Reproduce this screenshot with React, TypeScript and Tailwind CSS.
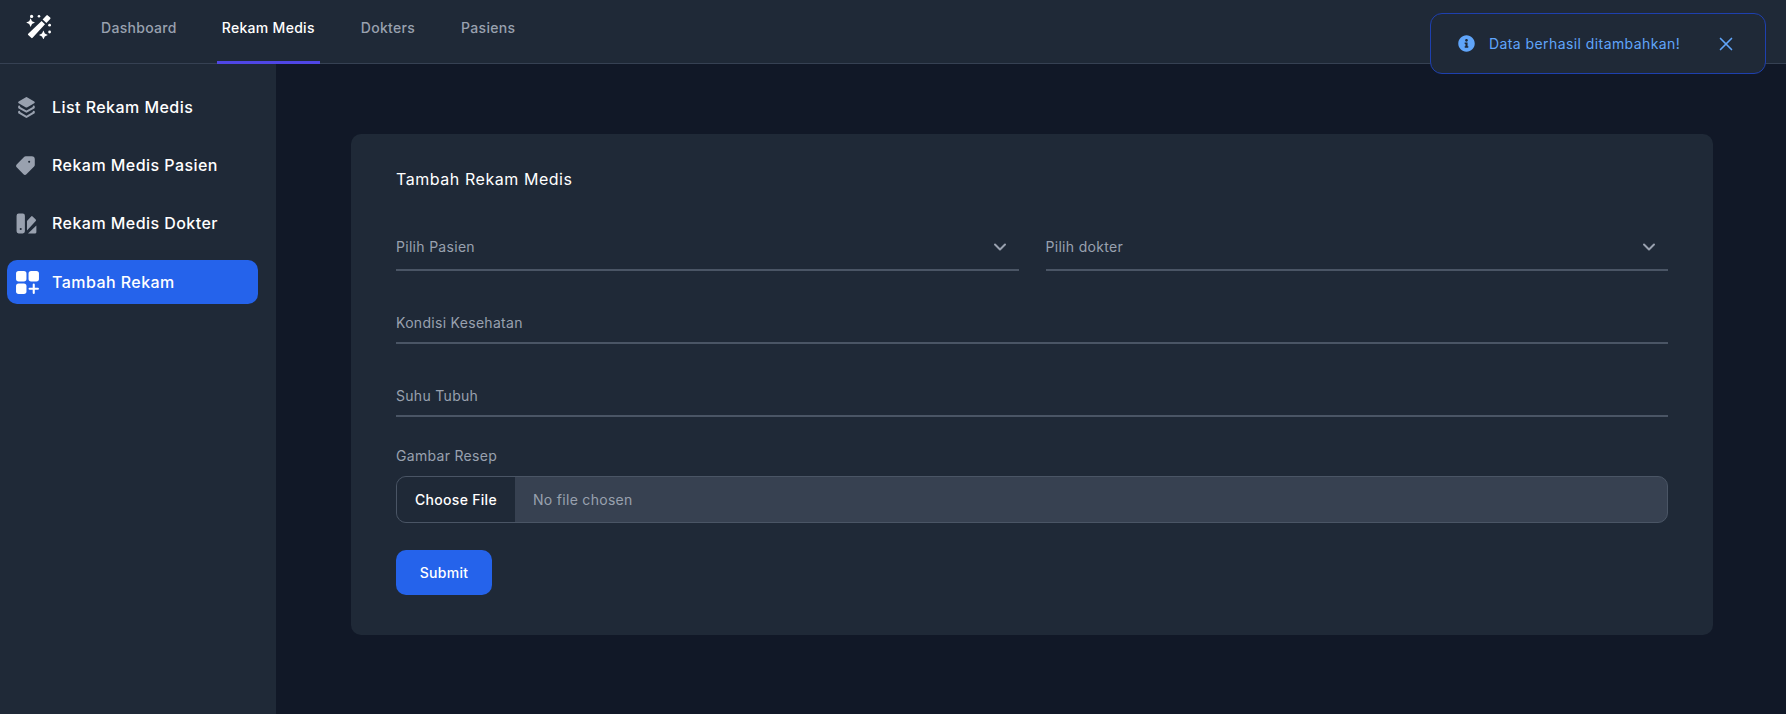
import { FaInfoCircle } from "react-icons/fa"
import { ChevronDown, X } from "lucide-react"

const font = "font-['Inter','Liberation_Sans',sans-serif]"

function Sparkle({ x, y, r }: { x: number; y: number; r: number }) {
  const k = r * 0.32
  return <path d={`M${x} ${y - r}L${x + k} ${y - k}L${x + r} ${y}L${x + k} ${y + k}L${x} ${y + r}L${x - k} ${y + k}L${x - r} ${y}L${x - k} ${y - k}Z`} />
}

function WandIcon() {
  return (
    <svg viewBox="0 0 26 26" fill="currentColor" className="w-[26px] h-[26px]">
      <path d="M15.6 8 19 11.2 6.6 24.8a1 1 0 0 1-1.4 0l-3-2.7a1 1 0 0 1 0-1.4L15.6 8Z" />
      <path d="M20.4 2.4a1 1 0 0 1 1.4 0l2.4 2.2a1 1 0 0 1 0 1.4l-3.8 4-3.8-3.6 3.8-4Z" />
      <Sparkle x={4.6} y={9.6} r={4.4} />
      <Sparkle x={17.4} y={22} r={4.4} />
      <circle cx="5.6" cy="3.4" r="1.6" />
      <circle cx="13" cy="3.2" r="1.3" />
      <circle cx="23.6" cy="12.2" r="1.4" />
      <circle cx="23.6" cy="19" r="1.4" />
    </svg>
  )
}

function LayersIcon() {
  return (
    <svg viewBox="1 0 24 24" fill="currentColor" className="w-[25px] h-[25px]">
      <path d="M5.005 10.19a1 1 0 0 1 1 1v.233l5.998 3.464L18 11.423v-.232a1 1 0 1 1 2 0V12a1 1 0 0 1-.5.866l-6.997 4.042a1 1 0 0 1-1 0l-6.998-4.042a1 1 0 0 1-.5-.866v-.81a1 1 0 0 1 1-1ZM5 15.15a1 1 0 0 1 1 1v.232l5.997 3.464 5.998-3.464v-.232a1 1 0 1 1 2 0v.81a1 1 0 0 1-.5.865l-6.998 4.042a1 1 0 0 1-1 0L4.5 17.824a1 1 0 0 1-.5-.866v-.81a1 1 0 0 1 1-1Z" />
      <path d="M12.503 2.134a1 1 0 0 0-1 0L4.501 6.17A1 1 0 0 0 4.5 7.902l7.002 4.047a1 1 0 0 0 1 0l6.998-4.04a1 1 0 0 0 0-1.732l-6.997-4.042Z" />
    </svg>
  )
}

function TagIcon() {
  return (
    <svg viewBox="2 0 24 24" fill="currentColor" className="w-[25px] h-[25px]">
      <path d="M18.045 3.007 12.31 3a1.965 1.965 0 0 0-1.4.585l-7.33 7.394a2 2 0 0 0 0 2.805l6.573 6.631a1.957 1.957 0 0 0 1.4.585 1.965 1.965 0 0 0 1.4-.585l7.409-7.477A2 2 0 0 0 21 11.479v-5.5a2.972 2.972 0 0 0-2.955-2.972Zm-2.452 6.438a1 1 0 1 1 0-2 1 1 0 0 1 0 2Z" />
    </svg>
  )
}

function SwatchIcon() {
  return (
    <svg viewBox="1 0 24 24" fill="currentColor" className="w-[25px] h-[25px]">
      <path fillRule="evenodd" d="M4.5 2.5h4a2 2 0 0 1 2 2v15a2 2 0 0 1-2 2h-4a2 2 0 0 1-2-2v-15a2 2 0 0 1 2-2Zm2 15.8a1 1 0 1 0 0-2 1 1 0 0 0 0 2Z" />
      <path d="M12.5 9.5 16.5 5.2a1 1 0 0 1 1.4 0l3 3a1 1 0 0 1 0 1.4l-8.4 9V9.5Z" />
      <path d="M21.5 14v6.5a1 1 0 0 1-1 1h-7l8-7.5Z" />
    </svg>
  )
}

function GridPlusIcon() {
  return (
    <svg viewBox="0 0 24 24" fill="currentColor" className="w-[25px] h-[25px]">
      <rect x="1" y="1" width="10" height="10" rx="2.5" />
      <rect x="13" y="1" width="10" height="10" rx="2.5" />
      <rect x="1" y="13" width="10" height="10" rx="2.5" />
      <path d="M18 13a1 1 0 0 1 1 1v3h3a1 1 0 1 1 0 2h-3v3a1 1 0 1 1-2 0v-3h-3a1 1 0 1 1 0-2h3v-3a1 1 0 0 1 1-1Z" />
    </svg>
  )
}

function SideItem({ icon, label, active }: { icon: React.ReactNode; label: string; active?: boolean }) {
  return (
    <div className={`flex items-center h-[44px] pl-[8px] rounded-[10px] text-[16px] font-medium tracking-[0.45px] text-white ${active ? "mt-[1px] bg-[#2563eb]" : ""}`}>
      <span className={active ? "text-white" : "text-gray-400"}>{icon}</span>
      <span className="ml-[12px]">{label}</span>
    </div>
  )
}

function Field({ label }: { label: string }) {
  return (
    <div className="h-[47px] flex items-center border-b-2 border-gray-600 text-[14px] tracking-[0.3px] text-gray-400 pt-[6px]">
      {label}
    </div>
  )
}

function SelectField({ label }: { label: string }) {
  return (
    <div className="flex-1 h-[47px] flex items-center justify-between border-b-2 border-gray-600 text-[14px] tracking-[0.3px] text-gray-400 pr-[9px]">
      <span>{label}</span>
      <ChevronDown className="w-[20px] h-[20px] text-gray-400" strokeWidth={2.4} />
    </div>
  )
}

export default function App() {
  return (
    <div className={`${font} relative h-[714px] flex flex-col bg-[#111827] overflow-hidden`}>
      <nav className="h-[64px] shrink-0 flex bg-[#1f2937] border-b border-gray-700 pl-[26px]">
        <div className="w-[70px] pt-[13px] text-white">
          <WandIcon />
        </div>
        <div className="flex text-[14px] font-medium tracking-[0.3px] text-gray-400">
          <a className="px-[5px] pt-[17px] h-[64px]">Dashboard</a>
          <a className="ml-[35px] px-[5px] pt-[17px] h-[64px] text-white border-b-[3px] border-[#4f46e5]">Rekam Medis</a>
          <a className="ml-[36px] px-[5px] pt-[17px] h-[64px]">Dokters</a>
          <a className="ml-[36px] px-[5px] pt-[17px] h-[64px]">Pasiens</a>
        </div>
      </nav>

      <div className="flex-1 flex min-h-0">
        <aside className="w-[276px] shrink-0 bg-[#1f2937] pl-[7px] pr-[18px] pt-[21px] flex flex-col gap-[14px]">
          <SideItem icon={<LayersIcon />} label="List Rekam Medis" />
          <SideItem icon={<TagIcon />} label="Rekam Medis Pasien" />
          <SideItem icon={<SwatchIcon />} label="Rekam Medis Dokter" />
          <SideItem icon={<GridPlusIcon />} label="Tambah Rekam" active />
        </aside>

        <main className="flex-1 pl-[75px] pr-[73px] pt-[70px]">
          <div className="h-[501px] rounded-[10px] bg-[#1f2937] px-[45px] pt-[33px]">
            <h1 className="text-[16px] font-normal tracking-[0.55px] text-white leading-[24px]">Tambah Rekam Medis</h1>
            <div className="mt-[33px] flex gap-[27px]">
              <SelectField label="Pilih Pasien" />
              <SelectField label="Pilih dokter" />
            </div>
            <div className="mt-[26px]">
              <Field label="Kondisi Kesehatan" />
            </div>
            <div className="mt-[26px]">
              <Field label="Suhu Tubuh" />
            </div>
            <div className="mt-[29px] text-[14px] tracking-[0.3px] text-gray-400 leading-[20px]">Gambar Resep</div>
            <div className="mt-[10px] h-[47px] flex items-center rounded-[10px] border border-gray-600 bg-[#374151] overflow-hidden text-[14px] tracking-[0.3px]">
              <div className="h-full w-[118px] flex items-center justify-center bg-[#1f2937] font-medium text-white">Choose File</div>
              <span className="ml-[18px] text-gray-400">No file chosen</span>
            </div>
            <button className="mt-[27px] w-[96px] h-[45px] rounded-[10px] bg-[#2563eb] text-[14px] font-medium tracking-[0.3px] text-white">Submit</button>
          </div>
        </main>
      </div>

      <div className="absolute top-[13px] right-[20px] w-[336px] h-[61px] flex items-center rounded-[12px] border border-[#1e40af] bg-[#1f2937] text-[#60a5fa] text-[14px] tracking-[0.42px] pl-[27px]">
        <FaInfoCircle className="w-[17px] h-[17px]" />
        <span className="ml-[14px]">Data berhasil ditambahkan!</span>
        <X className="absolute right-[28px] w-[22px] h-[22px]" strokeWidth={1.8} />
      </div>
    </div>
  )
}
